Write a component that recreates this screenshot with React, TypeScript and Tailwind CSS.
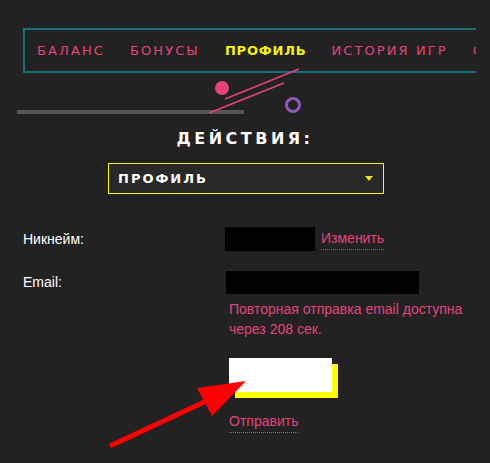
import React from "react";

const tabs = [
  { label: "Баланс", active: false },
  { label: "Бонусы", active: false },
  { label: "Профиль", active: true },
  { label: "История игр", active: false },
  { label: "Сообщения", active: false },
];

export default function App() {
  return (
    <div className="relative w-[490px] h-[463px] overflow-hidden bg-[#222222] font-['Liberation_Sans',Arial,sans-serif]">
      {/* tabs */}
      <div className="pt-[28px] pl-[23px]">
        <div className="w-[453px] h-[45px] overflow-hidden">
          <nav className="h-full flex items-center gap-[25px] pl-[12px] border-l-2 border-y-2 border-[#1c7075] whitespace-nowrap font-['DejaVu_Sans',sans-serif] text-[13px] uppercase">
            {tabs.map((tab) => (
              <span
                key={tab.label}
                className={
                  tab.active
                    ? "font-bold tracking-[0.8px] text-[#f7f500]"
                    : "tracking-[2.1px] text-[#e5427b]"
                }
              >
                {tab.label}
              </span>
            ))}
          </nav>
        </div>
      </div>

      <h2 className="mt-[56px] text-center leading-[20px] font-['DejaVu_Sans',sans-serif] font-bold text-[16px] tracking-[3.5px] text-white uppercase">
        Действия:
      </h2>

      <div className="mt-[14px] ml-[108px] w-[276px] h-[31px] border border-[#ffff00] bg-[#282828] flex items-center justify-between pl-[9px] pr-[10px]">
        <span className="font-['DejaVu_Sans',sans-serif] font-bold text-[13px] tracking-[2px] text-white uppercase">
          Профиль
        </span>
        <svg width="8" height="5" viewBox="0 0 8 5">
          <path d="M0 0 H8 L4 5 Z" fill="#f5e61a" />
        </svg>
      </div>

      {/* profile form */}
      <div className="mt-[33px] pl-[23px] text-[14px] text-white">
        <div className="flex items-center">
          <span className="w-[202px]">Никнейм:</span>
          <div className="w-[90px] h-[24px] bg-black" />
          <a className="ml-[6px] leading-[20px] pb-[1px] text-[#e5427b] border-b border-dotted border-[#e5427b]">
            Изменить
          </a>
        </div>

        <div className="mt-[20px] flex">
          <span className="w-[203px] h-[23px] flex items-center">Email:</span>
          <div className="flex flex-col items-start">
            <div className="w-[193px] h-[23px] bg-black" />
            <p className="mt-[5px] ml-[3px] leading-[20px] text-[#e5427b]">
              Повторная отправка email доступна
              <br />
              через 208 сек.
            </p>
            <div className="mt-[19px] ml-[3px] w-[103px] h-[34px] bg-white shadow-[6px_6px_0_#ffff00]" />
            <a className="mt-[19px] ml-[3px] leading-[20px] pb-[1px] text-[#e5427b] border-b border-dotted border-[#e5427b]">
              Отправить
            </a>
          </div>
        </div>
      </div>

      {/* decoration under tabs */}
      <svg className="absolute left-0 top-0 pointer-events-none" width="490" height="130">
        <rect x="17" y="110" width="227" height="4" fill="#555555" />
        <line x1="225" y1="99" x2="299" y2="69" stroke="#e5427b" strokeWidth="1.6" />
        <line x1="209" y1="113" x2="284" y2="83" stroke="#e5427b" strokeWidth="1.6" />
        <circle cx="222" cy="88" r="7" fill="#e8427c" />
        <circle cx="293" cy="105" r="6.5" fill="none" stroke="#9158b6" strokeWidth="3" />
      </svg>

      {/* red annotation arrow */}
      <svg className="absolute left-0 top-0 pointer-events-none" width="490" height="463">
        <line x1="110" y1="446" x2="215" y2="397" stroke="#ff0000" strokeWidth="5" />
        <path d="M246 381 L197 388 L212 416 Z" fill="#ff0000" />
      </svg>
    </div>
  );
}
